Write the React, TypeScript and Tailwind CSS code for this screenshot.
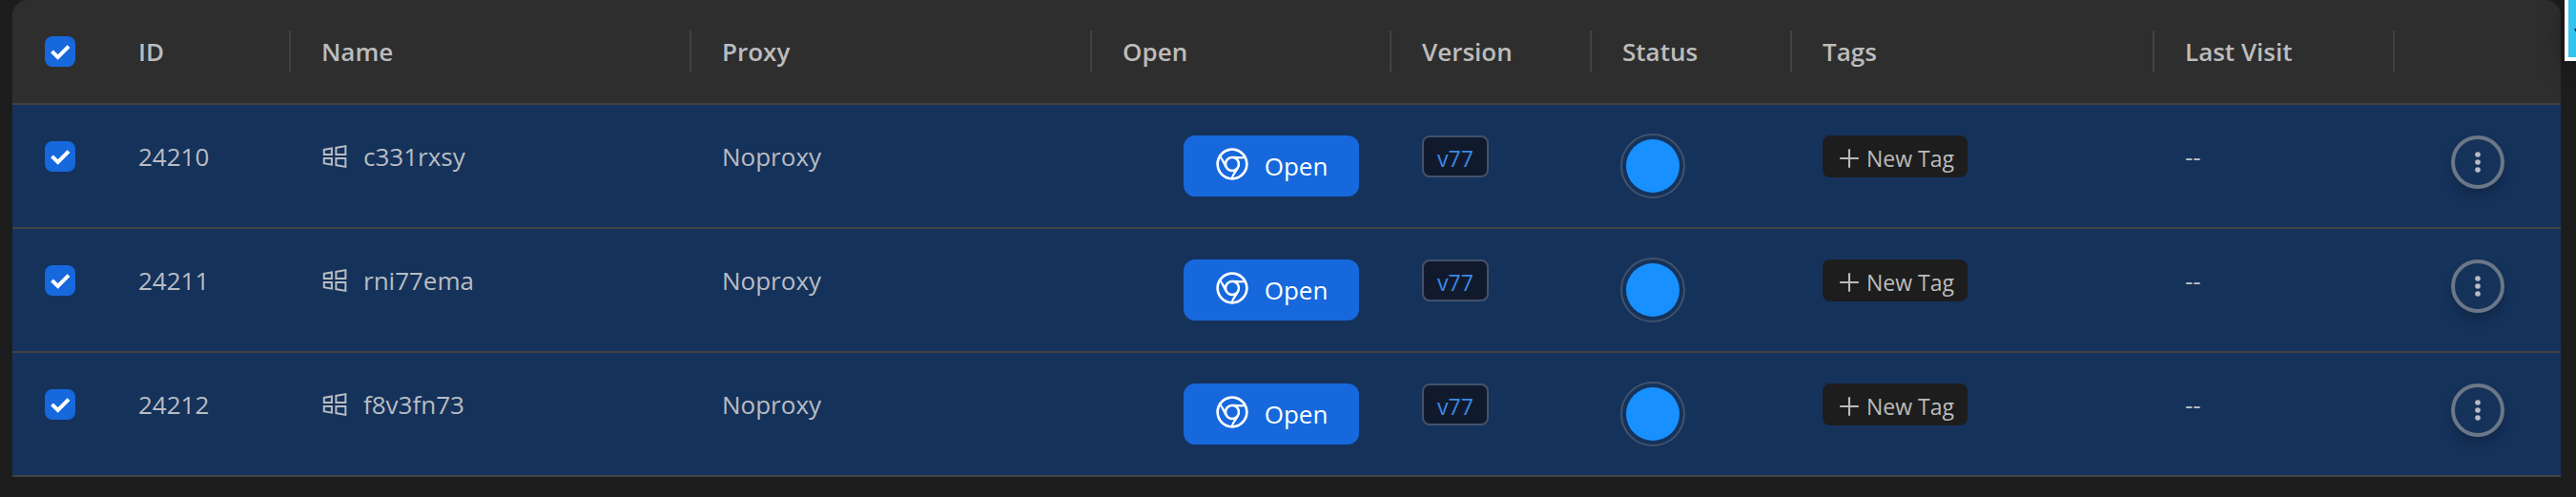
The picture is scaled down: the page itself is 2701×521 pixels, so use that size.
import React, { useState } from "react";
import { AiOutlineChrome, AiOutlinePlus, AiOutlineWindows } from "react-icons/ai";
import clsx from "clsx";

interface Profile {
  id: number;
  name: string;
  proxy: string;
  version: string;
  lastVisit: string;
}

interface Column {
  title: string;
  width: string;
  divider: boolean;
}

const profiles: Profile[] = [
  { id: 24210, name: "c331rxsy", proxy: "Noproxy", version: "v77", lastVisit: "--" },
  { id: 24211, name: "rni77ema", proxy: "Noproxy", version: "v77", lastVisit: "--" },
  { id: 24212, name: "f8v3fn73", proxy: "Noproxy", version: "v77", lastVisit: "--" },
];

const columns: Column[] = [
  { title: "ID", width: "w-[192px]", divider: true },
  { title: "Name", width: "w-[420px]", divider: true },
  { title: "Proxy", width: "w-[420px]", divider: true },
  { title: "Open", width: "w-[314px]", divider: true },
  { title: "Version", width: "w-[210px]", divider: true },
  { title: "Status", width: "w-[210px]", divider: true },
  { title: "Tags", width: "w-[380px]", divider: true },
  { title: "Last Visit", width: "w-[252px]", divider: true },
  { title: "", width: "w-[174px]", divider: false },
];

interface CheckboxProps {
  checked: boolean;
  label: string;
  onChange: () => void;
}

const Checkbox: React.FC<CheckboxProps> = ({ checked, label, onChange }) => (
  <label className="mx-auto grid size-8 cursor-pointer">
    <input
      type="checkbox"
      aria-label={label}
      checked={checked}
      onChange={onChange}
      className="col-start-1 row-start-1 size-8 appearance-none rounded-lg border-2 border-[#424242] checked:border-[#1668dc] checked:bg-[#1668dc]"
    />
    {checked && (
      <svg viewBox="0 0 32 32" className="pointer-events-none col-start-1 row-start-1 size-8">
        <path d="M7.5 15.8L13.7 22L25 10.7" fill="none" stroke="#fff" strokeWidth="4" />
      </svg>
    )}
  </label>
);

const App: React.FC = () => {
  const [selected, setSelected] = useState<number[]>(profiles.map((p) => p.id));
  const allSelected = selected.length === profiles.length;

  const toggleAll = () => {
    setSelected(allSelected ? [] : profiles.map((p) => p.id));
  };

  const toggle = (id: number) => {
    setSelected((prev) =>
      prev.includes(id) ? prev.filter((item) => item !== id) : [...prev, id]
    );
  };

  return (
    <div className="relative min-h-screen overflow-hidden bg-[#1d1d1d] pr-4 pl-[13px] font-['Open_Sans','Noto_Sans',sans-serif] text-[26px] leading-[44px] text-[#b9bdc2]">
      <table className="w-full table-fixed border-separate border-spacing-0 text-left">
        <thead>
          <tr>
            <th className="w-[100px] rounded-tl-2xl border-b-2 border-[#424242] bg-[#2e2e2e] py-8">
              <Checkbox checked={allSelected} label="Select all" onChange={toggleAll} />
            </th>
            {columns.map((column) => (
              <th
                key={column.title}
                className={clsx(
                  "border-b-2 border-[#424242] bg-[#2e2e2e] py-8 font-semibold text-[#bcbcbc] last:rounded-tr-2xl",
                  column.width
                )}
              >
                <div className={clsx("h-11 pl-8", column.divider && "border-r-2 border-[#424242]")}>
                  {column.title}
                </div>
              </th>
            ))}
          </tr>
        </thead>
        <tbody>
          {profiles.map((profile) => (
            <tr
              key={profile.id}
              className={clsx(
                "align-top *:h-[130px] *:border-b-2 *:border-[#424242]",
                selected.includes(profile.id) ? "bg-[#15325b]" : "bg-[#1d1d1d]"
              )}
            >
              <td className="pt-[38px]">
                <Checkbox
                  checked={selected.includes(profile.id)}
                  label={`Select ${profile.name}`}
                  onChange={() => toggle(profile.id)}
                />
              </td>
              <td className="px-8 pt-8">{profile.id}</td>
              <td className="px-8 pt-8">
                <div className="flex items-center gap-4">
                  <AiOutlineWindows viewBox="64 64 896 896" className="size-7" />
                  {profile.name}
                </div>
              </td>
              <td className="px-8 pt-8">{profile.proxy}</td>
              <td className="px-[34px] pt-8">
                <button
                  type="button"
                  className="ml-auto flex h-16 w-[184px] items-center justify-center gap-4 rounded-xl bg-[#1668dc] text-white"
                >
                  <AiOutlineChrome viewBox="64 64 896 896" className="mb-1 size-9" />
                  Open
                </button>
              </td>
              <td className="px-8 pt-8">
                <span className="inline-flex h-11 items-center rounded-lg border-2 border-[#42526a] bg-[#111a2c] px-3.5 pt-1 align-top text-[23px] text-[#3c89e8]">
                  {profile.version}
                </span>
              </td>
              <td className="px-[30px] pt-[30px]">
                <div className="flex size-[68px] items-center justify-center rounded-full border-2 border-[#42526a]">
                  <span className="size-14 rounded-full bg-[#1890ff]" />
                </div>
              </td>
              <td className="px-8 pt-8">
                <button
                  type="button"
                  className="flex h-11 items-center gap-1 rounded-lg bg-[#1d1d1d] px-3.5 pt-1 text-[23px] text-[#bcbcbc]"
                >
                  <AiOutlinePlus className="size-7" />
                  New Tag
                </button>
              </td>
              <td className="px-8 pt-8">{profile.lastVisit}</td>
              <td className="pt-8">
                <button
                  type="button"
                  aria-label="More actions"
                  className="mx-auto flex size-14 items-center justify-center rounded-full border-4 border-[#6b7787] shadow-[0_8px_12px_rgba(0,0,0,0.2)]"
                >
                  <svg viewBox="0 0 28 28" fill="currentColor" className="size-7">
                    <circle cx="14" cy="6" r="2.8" />
                    <circle cx="14" cy="14" r="2.8" />
                    <circle cx="14" cy="22" r="2.8" />
                  </svg>
                </button>
              </td>
            </tr>
          ))}
        </tbody>
      </table>
      {/* edge of the floating panel */}
      <div className="absolute top-0 right-0 h-16 w-3 border-b-4 border-l-4 border-white bg-[#33c3ef] shadow-[0_8px_24px_rgba(0,0,0,0.4)]">
        <svg viewBox="0 0 8 60" className="h-[60px] w-2">
          <path d="M6 30h2v3h-1v-2h-1z" fill="#1d1d1d" />
        </svg>
      </div>
    </div>
  );
};

export default App;
